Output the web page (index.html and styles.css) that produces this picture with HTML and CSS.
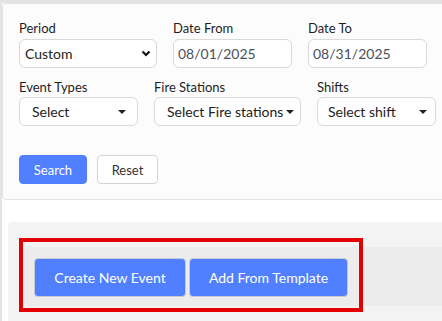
FILE: index.html
```html
<!DOCTYPE html>
<html lang="en">
<head>
    <meta charset="UTF-8">
    <meta name="viewport" content="width=device-width, initial-scale=1.0">
    <title>Events</title>
    <link rel="stylesheet" href="styles.css">
</head>
<body>
    <div class="main">
        <div class="filter-panel">
            <div class="row">
                <div class="field field-period">
                    <label>Period</label>
                    <div class="select-box">
                        <span>Custom</span>
                        <svg class="chevron" width="10" height="7" viewBox="0 0 10 7">
                            <path d="M1.5 1.5 L5 5 L8.5 1.5" fill="none" stroke="#111" stroke-width="2.2"/>
                        </svg>
                    </div>
                </div>
                <div class="field field-date">
                    <label for="dateFrom">Date From</label>
                    <input type="text" id="dateFrom" class="date-input" value="08/01/2025">
                </div>
                <div class="field field-date">
                    <label for="dateTo">Date To</label>
                    <input type="text" id="dateTo" class="date-input" value="08/31/2025">
                </div>
            </div>
            <div class="row row-second">
                <div class="field field-events">
                    <label>Event Types</label>
                    <button class="dropdown">Select <span class="caret"></span></button>
                </div>
                <div class="field field-stations">
                    <label>Fire Stations</label>
                    <button class="dropdown dropdown-low">Select Fire stations <span class="caret"></span></button>
                </div>
                <div class="field field-shifts">
                    <label>Shifts</label>
                    <button class="dropdown dropdown-low">Select shift <span class="caret"></span></button>
                </div>
            </div>
            <div class="actions">
                <button class="btn btn-primary">Search</button>
                <button class="btn btn-default">Reset</button>
            </div>
        </div>

        <div class="events-section">
            <div class="toolbar">
                <button class="btn-create">Create New Event</button>
                <button class="btn-create">Add From Template</button>
            </div>
            <div class="highlight"></div>
        </div>
    </div>
</body>
</html>
```

FILE: styles.css
```css
body {
    margin: 0;
    height: 321px;
    background-color: #e4e4e4;
    font-family: Lato, "Open Sans", sans-serif;
    color: #222;
    overflow: hidden;
}
.main {
    margin: 3px 0 0 2px;
    background-color: #fff;
    height: 318px;
    overflow: hidden;
}
.filter-panel {
    width: 460px;
    background-color: #fcfcfc;
    border: 1px solid #e2e2e2;
    border-radius: 4px;
    padding: 16px 0 15px 16px;
    box-sizing: border-box;
}
.row {
    display: flex;
    gap: 16px;
}
.row-second {
    margin-top: 11px;
}
.field label {
    display: block;
    font-size: 13px;
    line-height: 16px;
    margin-bottom: 3px;
    color: #1e1e1e;
}
.row-second .field label {
    margin-bottom: 2px;
}
.field-period { width: 138px; }
.field-date { width: 119px; }
.field-events { width: 119px; }
.field-stations { width: 147px; }
.field-shifts { width: 119px; }

.select-box {
    display: flex;
    align-items: center;
    justify-content: space-between;
    height: 29px;
    padding: 0 5px;
    border: 1px solid #d9d9d9;
    border-radius: 6px;
    background-color: #fff;
    font-size: 14px;
    box-sizing: border-box;
}
.date-input {
    display: block;
    width: 100%;
    height: 29px;
    padding: 0 4px;
    border: 1px solid #d9d9d9;
    border-radius: 6px;
    background-color: #fff;
    font-family: Lato, sans-serif;
    font-size: 14px;
    color: #4a4f5a;
    box-sizing: border-box;
}
.dropdown {
    display: flex;
    align-items: center;
    justify-content: space-between;
    width: 100%;
    height: 29px;
    padding: 0 11px 0 12px;
    border: 1px solid #d9d9d9;
    border-radius: 6px;
    background-color: #fff;
    font-family: Lato, sans-serif;
    font-size: 14px;
    color: #222;
    white-space: nowrap;
    box-sizing: border-box;
}
.dropdown-low {
    margin-top: 2px;
    padding: 0 6px 0 12px;
}
.field-shifts .dropdown {
    padding: 0 8px 0 10px;
}
.caret {
    width: 0;
    height: 0;
    border-left: 4px solid transparent;
    border-right: 4px solid transparent;
    border-top: 4px solid #222;
}
.actions {
    display: flex;
    gap: 10px;
    margin-top: 29px;
}
.btn {
    height: 29px;
    padding: 0;
    border-radius: 4px;
    font-family: Lato, sans-serif;
    font-size: 13px;
    cursor: pointer;
    box-sizing: border-box;
}
.btn-primary {
    width: 68px;
    background-color: #5080ff;
    border: 1px solid #5080ff;
    color: #fff;
}
.btn-default {
    width: 61px;
    background-color: #fff;
    border: 1px solid #d4d4d4;
    color: #333;
}

.events-section {
    position: relative;
    margin: 22px 0 0 6px;
    padding-top: 25px;
    background-color: #f3f3f3;
    border-radius: 4px 0 0 0;
    height: 100px;
}
.toolbar {
    display: flex;
    gap: 3px;
    margin-left: 17px;
    height: 59px;
    padding: 11px 0 0 9px;
    background-color: #ececec;
    border-radius: 4px 0 0 4px;
    box-sizing: border-box;
}
.btn-create {
    height: 39px;
    padding: 0;
    background-color: #5080ff;
    border: 1px solid #c6cbd6;
    border-radius: 4px;
    font-family: Lato, sans-serif;
    font-size: 14px;
    color: #fff;
    white-space: nowrap;
}
.btn-create:first-child {
    width: 152px;
}
.btn-create:last-child {
    width: 159px;
}
.highlight {
    position: absolute;
    left: 11px;
    top: 16px;
    width: 344px;
    height: 74px;
    border: 4px solid #e40000;
    box-sizing: border-box;
}
```
